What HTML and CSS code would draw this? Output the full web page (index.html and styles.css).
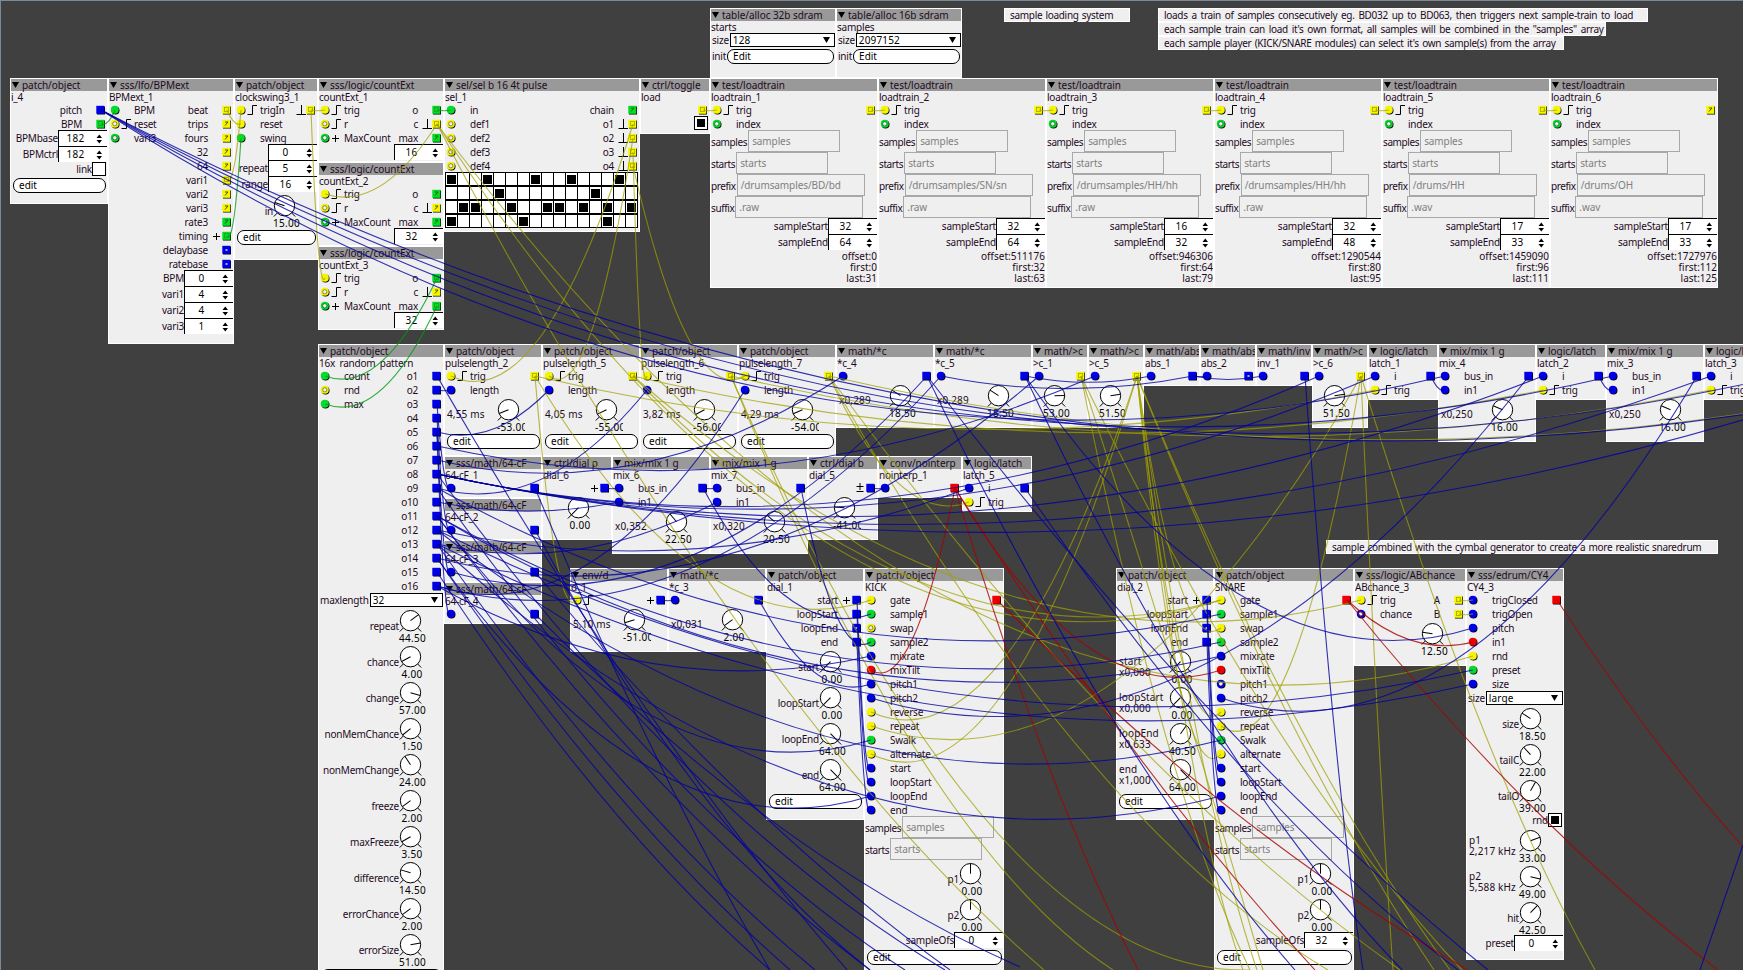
FILE: index.html
```html
<!DOCTYPE html>
<html lang="en">
<head>
<meta charset="utf-8">
<title>Patch editor</title>
<link rel="stylesheet" href="styles.css">
</head>
<body>
<main class="patch" id="patch">
  <svg class="wires" id="wires" width="1743" height="970" viewBox="0 0 1743 970"></svg>
</main>
<script src="patch.js"></script>
</body>
</html>
```
FILE: styles.css
```css
* { box-sizing: border-box; }
body { margin: 0; background: #404040; }
.patch {
  position: relative;
  width: 1743px;
  height: 970px;
  overflow: hidden;
  border-top: 1px solid #7a8a99;
  border-left: 1px solid #7a8a99;
  background: #404040;
  font-family: "Noto Sans", "Open Sans", sans-serif;
  font-size: 10px;
  line-height: 11px;
  letter-spacing: -0.22px;
  color: #1e0a1e;
  white-space: nowrap;
}
.wires { position: absolute; left: -1px; top: -1px; z-index: 2; fill: none; stroke-width: 1.1; }
.wire-b { stroke: #0000a0; stroke-opacity: 0.8; }
.wire-y { stroke: #a0a000; stroke-opacity: 0.72; }
.wire-g { stroke: #009a10; stroke-opacity: 0.78; }
.wire-r { stroke: #a80000; stroke-opacity: 0.8; }

.node {
  position: absolute;
  display: flex;
  flex-direction: column;
  background: #efefef;
  border: 1px solid #fff;
  overflow: hidden;
}
.node-title {
  flex: none;
  display: flex;
  align-items: center;
  height: 12px;
  gap: 3px;
  padding: 1px 0 0 1px;
  background: #999;
  letter-spacing: -0.05px;
}
.tri { flex: none; width: 7px; height: 6px; fill: #000; }
.node-title .tri { margin-top: -2px; }
.node-name { flex: none; height: 11px; line-height: 12px; word-spacing: 2px; }
.io-row { flex: none; display: flex; justify-content: space-between; height: 14px; padding: 2px 1px 0; }
.inlet, .outlet { display: flex; align-items: center; height: 12px; }
.outlet { margin-left: auto; }
.port { flex: none; width: 10px; height: 10px; overflow: visible; }
.glyph { flex: none; width: 14px; height: 12px; fill: none; stroke: #000; stroke-width: 1; }

.row { flex: none; display: flex; justify-content: flex-end; align-items: center; }
.row-spin { height: 16px; }
.spin {
  display: flex;
  align-items: center;
  width: 49px;
  height: 16px;
  background: #fff;
  border-top: 1px solid #000;
  border-left: 1px solid #000;
  color: #000;
}
.spin-value { width: 33px; text-align: center; letter-spacing: 0.2px; }
.spin-arrows { width: 14px; height: 10px; fill: #000; }

.row-dial { height: 36px; }
.row-dial .label { padding-top: 2px; }
.row-dial .unit { margin-right: auto; padding: 1px 0 0 2px; letter-spacing: 0.15px; }
.dial { width: 44px; height: 36px; }
.dial-face { display: block; width: 27px; height: 26px; overflow: visible; }
.dial-circle { fill: #fff; stroke: #000; stroke-width: 1; }
.dial-mark { stroke: #000; stroke-width: 1; }
.dial-value {
  display: block;
  width: 26px;
  height: 10px;
  line-height: 10px;
  text-align: center;
  color: #000;
  letter-spacing: 0.3px;
}
.dial-value-long { width: 28px; text-align: left; overflow-x: clip; }

.row-check { height: 14px; padding-right: 1px; }
.check { width: 14px; height: 14px; padding: 2px; background: #fff; border: 1px solid #000; }
.check-on { display: block; width: 8px; height: 8px; background: #000; }

.row-btn { height: 17px; padding: 2px 1px 0 2px; }
.row-btn .label { padding-left: 0; margin-left: -1px; margin-right: 1px; }
.btn {
  flex: 1;
  height: 15px;
  padding-left: 5px;
  line-height: 13px;
  background: #fff;
  border: 1px solid #000;
  border-radius: 7px;
  color: #000;
  letter-spacing: 0;
}
.row-drop { height: 15px; padding: 1px 0 0 1px; }
.row-drop .label { padding-right: 1px; }
.drop {
  flex: 1;
  display: flex;
  align-items: center;
  justify-content: space-between;
  height: 14px;
  padding: 0 4px 0 2px;
  background: #fff;
  border: 1px solid #000;
  color: #000;
  letter-spacing: 0.15px;
}
.row-field { height: 22px; justify-content: flex-start; letter-spacing: -0.4px; }
.row-field .label { padding-top: 2px; padding-right: 1px; }
.field { height: 22px; padding-left: 3px; line-height: 20px; border: 1px solid #a8a8a8; color: #808080; letter-spacing: -0.1px; }
.row-info { height: 11px; padding-top: 1px; letter-spacing: 0; }

.steps { display: grid; grid-template-columns: repeat(16, 12px); width: 193px; margin: 0; background: #000; padding: 1px 0 1px 1px; row-gap: 2px; }
.step { height: 12px; padding: 2px 1px 1px; margin-right: 1px; background: #fff; }
.step-on { display: block; height: 9px; background: #000; }

.comment {
  position: absolute;
  height: 14px;
  padding-left: 5px;
  line-height: 13px;
  background: #efefef;
  border: 1px solid #fff;
  letter-spacing: -0.3px;
}
```
FILE: patch.js
```js
const patch = document.getElementById('patch');
const wires = document.getElementById('wires');
const COLORS = { b: '#0000e6', y: '#f5f500', g: '#00dc28', r: '#f00000' };
const TRI = '<svg class="tri" viewBox="0 0 7 6"><path d="M0 0H7L3.5 6Z"/></svg>';
const IN_GLYPHS = {
  r: '<path d="M1.5 10.5H6.5V1.5H11"/>',
  p: '<path d="M2 6.5H9M5.5 3V10"/>',
  '-': ''
};
const OUT_GLYPHS = {
  p: '<path d="M5 6.5H12M8.5 3V10"/>',
  m: '<path d="M4.5 4.5H11.5M8 1V8M4.5 9.5H11.5"/>',
  u: '<path d="M4.5 10.5H14M9.5 10V1"/>',
  '-': ''
};

/* Port spec: colour letter (upper case = connected), glyph letter, label. */
function inlet(spec) {
  const on = spec[0] !== spec[0].toLowerCase();
  const c = COLORS[spec[0].toLowerCase()];
  const hole = on ? '' : '<circle cx="4.8" cy="4.8" r="2.1" fill="#efefef" stroke="#000" stroke-opacity=".6" stroke-width=".7"/>';
  return `<span class="inlet"><svg class="port" viewBox="0 0 10 10"><circle cx="5.5" cy="5.6" r="4" fill="#000"/><circle cx="4.8" cy="4.8" r="4" fill="${c}"/>${hole}</svg><svg class="glyph" viewBox="0 0 14 12">${IN_GLYPHS[spec[1]]}</svg><span>${spec.slice(2)}</span></span>`;
}
function outlet(spec) {
  const key = spec[0].toLowerCase(), on = spec[0] !== key;
  let mark = '';
  if (key === 'b') mark = on ? '' : '<rect x="3.5" y="4" width="2" height="2" fill="#aab"/>';
  else if (key !== 'r') mark = on
    ? '<rect x="2.5" y="2.5" width="4" height="4" fill="none" stroke="#550" stroke-opacity=".8" stroke-width="1" stroke-dasharray="1 1"/>'
    : '<path d="M3 3H6M6 3L3 6.5" fill="none" stroke="#440" stroke-width=".9"/>';
  return `<span class="outlet"><span>${spec.slice(2)}</span><svg class="glyph" viewBox="0 0 14 12">${OUT_GLYPHS[spec[1]]}</svg><svg class="port" viewBox="0 0 10 10"><rect x="1" y="1.5" width="8" height="8" fill="#000"/><rect x=".3" y=".8" width="8" height="8" fill="${COLORS[key]}"/>${mark}</svg></span>`;
}

const STEPS = [[0, 3, 7, 10, 14], [4, 12], [1, 2, 5, 8, 9, 11, 13, 15], [0, 6, 13]];
const label = t => t ? `<span class="label">${t}</span>` : '';
const widgets = {
  spin: (t, v) => `<div class="row row-spin">${label(t)}<span class="spin"><span class="spin-value">${v}</span><svg class="spin-arrows" viewBox="0 0 14 10"><path d="M4.5 4L7.3 0.5L10 4ZM4.5 6L7.3 9.5L10 6Z"/></svg></span></div>`,
  dial: (t, v, bipolar, unit) => {
    const n = parseFloat(v);
    const deg = bipolar ? n / 64 * 135 : n / 64 * 270 - 135;
    return `<div class="row row-dial">${unit ? `<span class="unit">${unit}</span>` : label(t)}<span class="dial"><svg class="dial-face" viewBox="0 0 27 26"><path class="dial-mark" d="M4.3 21L0.8 24.5M18.7 21L22.2 24.5"/><circle class="dial-circle" cx="11.5" cy="13.7" r="10.2"/><path class="dial-mark" d="M11.5 13.7V3.6" transform="rotate(${deg} 11.5 13.7)"/></svg><span class="dial-value${v.length > 5 ? ' dial-value-long' : ''}">${v}</span></span></div>`;
  },
  check: (t, on) => `<div class="row row-check">${label(t)}<span class="check">${on ? '<i class="check-on"></i>' : ''}</span></div>`,
  btn: (t, v) => `<div class="row row-btn">${label(t)}<span class="btn">${v}</span></div>`,
  drop: (t, v) => `<div class="row row-drop">${label(t)}<span class="drop">${v}${TRI}</span></div>`,
  field: (t, v, w) => `<div class="row row-field">${label(t)}<span class="field" style="width:${w}px">${v}</span></div>`,
  info: t => `<div class="row row-info">${t}</div>`,
  steps: () => `<div class="steps">${STEPS.map(r => Array.from({ length: 16 }, (_, i) => `<span class="step">${r.includes(i) ? '<i class="step-on"></i>' : ''}</span>`).join('')).join('')}</div>`
};

const nodes = {};
function node(x, y, w, h, title, name, ins = [], outs = [], params = []) {
  nodes[name] = { x, y, w };
  const el = document.createElement('section');
  el.className = 'node';
  el.style.cssText = `left:${x - 1}px;top:${y - 1}px;width:${w}px;height:${h}px`;
  let html = `<div class="node-title">${TRI}${title}</div><div class="node-name">${name}</div>`;
  for (let i = 0; i < Math.max(ins.length, outs.length); i++) {
    html += `<div class="io-row">${ins[i] ? inlet(ins[i]) : ''}${outs[i] ? outlet(outs[i]) : ''}</div>`;
  }
  el.innerHTML = html + params.map(([k, ...a]) => widgets[k](...a)).join('');
  patch.append(el);
}
function comment(x, y, w, text, spacing) {
  const el = document.createElement('div');
  el.className = 'comment';
  el.style.cssText = `left:${x - 1}px;top:${y - 1}px;width:${w}px;word-spacing:${spacing}px`;
  el.textContent = text;
  patch.append(el);
}

/* ---- objects ---- */
node(710, 8, 126, 70, 'table/alloc 32b sdram', 'starts', [], [], [['drop', 'size', '128'], ['btn', 'init', 'Edit']]);
node(836, 8, 126, 70, 'table/alloc 16b sdram', 'samples', [], [], [['drop', 'size', '2097152'], ['btn', 'init', 'Edit']]);
comment(1004, 8, 126, 'sample loading system', 0.8);
comment(1158, 8, 490, 'loads a train of samples consecutively eg. BD032 up to BD063, then triggers next sample-train to load', 1.5);
comment(1158, 22, 448, 'each sample train can load it\'s own format, all samples will be combined in the "samples" array', 1.5);
comment(1158, 36, 406, 'each sample player (KICK/SNARE modules) can select it\'s own sample(s) from the array', 1);
comment(1326, 540, 392, 'sample combined with the cymbal generator to create a more realistic snaredrum', 0.85);

node(10, 78, 98, 126, 'patch/object', 'i_4', [], ['B-pitch', 'G-BPM'],
  [['spin', 'BPMbase', 182], ['spin', 'BPMctrl', 182], ['check', 'link'], ['btn', '', 'edit']]);
node(108, 78, 126, 266, 'sss/lfo/BPMext', 'BPMext_1', ['G-BPM', 'yrreset', 'g-vari3'],
  ['Y-beat', 'y-trips', 'y-fours', 'y-32', 'y-64', 'Y-vari1', 'y-vari2', 'y-vari3', 'g-rate3', 'Gptiming', 'b-delaybase', 'b-ratebase'],
  [['spin', 'BPM', 0], ['spin', 'vari1', 4], ['spin', 'vari2', 4], ['spin', 'vari3', 1]]);
node(234, 78, 84, 182, 'patch/object', 'clockswing3_1', ['YrtrigIn', 'Y-reset', 'G-swing'], ['Yu'],
  [['spin', '', 0], ['spin', 'repeat', 5], ['spin', 'range', 16], ['dial', 'in', '15.00'], ['btn', '', 'edit']]);
node(318, 78, 126, 84, 'sss/logic/countExt', 'countExt_1', ['Yrtrig', 'yrr', 'gpMaxCount'], ['G-o', 'Yuc', 'g-max'], [['spin', '', 16]]);
node(318, 162, 126, 84, 'sss/logic/countExt', 'countExt_2', ['Yrtrig', 'yrr', 'gpMaxCount'], ['g-o', 'yuc', 'g-max'], [['spin', '', 32]]);
node(318, 246, 126, 84, 'sss/logic/countExt', 'countExt_3', ['Yrtrig', 'yrr', 'gpMaxCount'], ['G-o', 'yuc', 'G-max'], [['spin', '', 32]]);
node(444, 78, 196, 154, 'sel/sel b 16 4t pulse', 'sel_1', ['G-in', 'y-def1', 'y-def2', 'y-def3', 'y-def4'],
  ['g-chain', 'Yuo1', 'Yuo2', 'Yuo3', 'Yuo4'], [['steps']]);
node(640, 78, 70, 56, 'ctrl/toggle', 'load', [], ['Y-'], [['check', '', true]]);
[['/drumsamples/BD/bd', '.raw', 32, 64, 0, 0, 31], ['/drumsamples/SN/sn', '.raw', 32, 64, 511176, 32, 63],
 ['/drumsamples/HH/hh', '.raw', 16, 32, 946306, 64, 79], ['/drumsamples/HH/hh', '.raw', 32, 48, 1290544, 80, 95],
 ['/drums/HH', '.wav', 17, 33, 1459090, 96, 111], ['/drums/OH', '.wav', 17, 33, 1727976, 112, 125]
].forEach(([prefix, suffix, s, e, off, first, last], i) =>
  node(710 + 168 * i, 78, 168, 210, 'test/loadtrain', 'loadtrain_' + (i + 1), ['Yrtrig', 'g-index'], [i < 5 ? 'Y-' : 'y-'],
    [['field', 'samples', 'samples', 92], ['field', 'starts', 'starts', 92], ['field', 'prefix', prefix, 128], ['field', 'suffix', suffix, 128],
     ['spin', 'sampleStart', s], ['spin', 'sampleEnd', e], ['info', 'offset:' + off], ['info', 'first:' + first], ['info', 'last:' + last]]));

node(318, 344, 126, 700, 'patch/object', '16x random pattern', ['G-count', 'y-rnd', 'G-max'],
  Array.from({ length: 16 }, (_, i) => 'B-o' + (i + 1)),
  [['drop', 'maxlength', '32'], ...[['repeat', '44.50'], ['chance', '4.00'], ['change', '57.00'], ['nonMemChance', '1.50'], ['nonMemChange', '24.00'],
    ['freeze', '2.00'], ['maxFreeze', '3.50'], ['difference', '14.50'], ['errorChance', '2.00'], ['errorSize', '51.00']].map(d => ['dial', ...d]), ['btn', '', 'edit']]);
[[2, '-53.00', '4,55 ms'], [5, '-55.00', '4,05 ms'], [6, '-56.00', '3,82 ms'], [7, '-54.00', '4,29 ms']].forEach(([n, v, u], i) =>
  node(444 + 98 * i, 344, 98, 112, 'patch/object', 'pulselength_' + n, ['Yrtrig', 'B-length'], ['Y-'], [['dial', '', v, true, u], ['btn', '', 'edit']]));
node(836, 344, 98, 84, 'math/*c', '*c_4', ['B-'], ['B-'], [['dial', '', '18.50', false, 'x0,289']]);
node(934, 344, 98, 84, 'math/*c', '*c_5', ['B-'], ['B-'], [['dial', '', '18.50', false, 'x0,289']]);
node(1032, 344, 56, 84, 'math/&gt;c', '>c_1', ['B-'], ['Y-'], [['dial', '', '53.00']]);
node(1088, 344, 56, 84, 'math/&gt;c', '>c_5', ['B-'], ['Y-'], [['dial', '', '51.50']]);
node(1144, 344, 56, 42, 'math/abs', 'abs_1', ['B-'], ['B-']);
node(1200, 344, 56, 42, 'math/abs', 'abs_2', ['B-'], ['b-']);
node(1256, 344, 56, 42, 'math/inv', 'inv_1', ['B-'], ['B-']);
node(1312, 344, 56, 84, 'math/&gt;c', '>c_6', ['B-'], ['Y-'], [['dial', '', '51.50']]);
node(1368, 344, 70, 56, 'logic/latch', 'latch_1', ['B-i', 'Yrtrig'], ['B-']);
node(1438, 344, 98, 98, 'mix/mix 1 g', 'mix_4', ['B-bus_in', 'B-in1'], ['B-'], [['dial', '', '16.00', false, 'x0,250']]);
node(1536, 344, 70, 56, 'logic/latch', 'latch_2', ['B-i', 'Yrtrig'], ['B-']);
node(1606, 344, 98, 98, 'mix/mix 1 g', 'mix_3', ['B-bus_in', 'B-in1'], ['B-'], [['dial', '', '16.00', false, 'x0,250']]);
node(1704, 344, 70, 56, 'logic/latch', 'latch_3', ['B-i', 'Yrtrig'], ['B-']);

for (let i = 0; i < 4; i++) node(444, 456 + 42 * i, 98, 42, 'sss/math/64-cF', '64-cF_' + (i + 1), ['B-'], ['B-']);
node(542, 456, 70, 84, 'ctrl/dial p', 'dial_6', [], ['Bp'], [['dial', '', '0.00']]);
node(612, 456, 98, 98, 'mix/mix 1 g', 'mix_6', ['B-bus_in', 'B-in1'], ['B-'], [['dial', '', '22.50', false, 'x0,352']]);
node(710, 456, 98, 98, 'mix/mix 1 g', 'mix_7', ['B-bus_in', 'B-in1'], ['B-'], [['dial', '', '20.50', false, 'x0,320']]);
node(808, 456, 70, 84, 'ctrl/dial b', 'dial_5', [], ['Bm'], [['dial', '', '-41.00', true]]);
node(878, 456, 84, 42, 'conv/nointerp', 'nointerp_1', ['B-'], ['R-']);
node(962, 456, 70, 56, 'logic/latch', 'latch_5', ['B-i', 'Yrtrig'], ['B-']);

const player = ofs => [['field', 'samples', 'samples', 92], ['field', 'starts', 'starts', 92], ['dial', 'p1', '0.00', true], ['dial', 'p2', '0.00', true], ['spin', 'sampleOfs', ofs], ['btn', '', 'edit']];
const playerIns = (swap, pitch1) => ['Y-gate', 'G-sample1', swap, 'G-sample2', 'B-mixrate', 'R-mixTilt', pitch1, 'B-pitch2', 'Y-reverse', 'Y-repeat', 'G-Swalk', 'Y-alternate', 'B-start', 'B-loopStart', 'B-loopEnd', 'B-end'];
node(570, 568, 98, 84, 'env/d', 'd_1', ['Yr'], ['Bp'], [['dial', '', '-51.00', true, '5,10 ms']]);
node(668, 568, 98, 84, 'math/*c', '*c_3', ['B-'], ['B-'], [['dial', '', '2.00', false, 'x0,031']]);
node(766, 568, 98, 252, 'patch/object', 'dial_1', [], ['Bpstart', 'B-loopStart', 'b-loopEnd', 'B-end'],
  [['dial', 'start', '0.00'], ['dial', 'loopStart', '0.00'], ['dial', 'loopEnd', '64.00'], ['dial', 'end', '64.00'], ['btn', '', 'edit']]);
node(864, 568, 140, 434, 'patch/object', 'KICK', playerIns('y-swap', 'B-pitch1'), ['R-'], player(0));
node(1116, 568, 98, 252, 'patch/object', 'dial_2', [], ['Bpstart', 'B-loopStart', 'b-loopEnd', 'B-end'],
  [['dial', '', '0.00', false, 'start<br>x0,000'], ['dial', '', '0.00', false, 'loopStart<br>x0,000'], ['dial', '', '40.50', false, 'loopEnd<br>x0,633'], ['dial', '', '64.00', false, 'end<br>x1,000'], ['btn', '', 'edit']]);
node(1214, 568, 140, 434, 'patch/object', 'SNARE', playerIns('Y-swap', 'b-pitch1'), ['R-'], player(32));
node(1354, 568, 112, 98, 'sss/logic/ABchance', 'ABchance_3', ['Yrtrig', 'b-chance'], ['Y-A', 'Y-B'], [['dial', '', '12.50']]);
node(1466, 568, 98, 392, 'sss/edrum/CY4', 'CY4_3', ['B-trigClosed', 'B-trigOpen', 'B-pitch', 'R-in1', 'Y-rnd', 'G-preset', 'B-size'], ['R-'],
  [['drop', 'size', 'large'], ['dial', 'size', '18.50'], ['dial', 'tailC', '22.00'], ['dial', 'tailO', '39.00'], ['check', 'rnd', true],
   ['dial', '', '33.00', true, 'p1<br>2,217 kHz'], ['dial', '', '49.00', true, 'p2<br>5,588 kHz'], ['dial', 'hit', '42.50'], ['spin', 'preset', 0]]);

/* ---- wires ---- */
const out = (id, row = 0) => [nodes[id].x + nodes[id].w - 7, nodes[id].y + 32 + 14 * row];
const inp = (id, row = 0) => [nodes[id].x + 7, nodes[id].y + 32 + 14 * row];
const o = n => out('16x random pattern', n - 1);
const paths = [];
const draw = (c, d) => paths.push(`<path class="wire-${c}" d="${d}"/>`);
/* A slack cable sags below its lower end by a tenth of its span. */
function wire(c, [x1, y1], ...ends) {
  for (const [x2, y2] of ends) {
    const cy = Math.max(y1, y2) + Math.abs(y2 - y1) * 0.1 + Math.abs(x2 - x1) * 0.1;
    draw(c, `M${x1} ${y1}Q${(x1 + x2) / 2} ${cy} ${x2} ${y2}`);
  }
}
/* Cables that leave the visible canvas: start, one point on the way, exit point. */
function exit(c, [x0, y0], [px, py], [qx, qy]) {
  const u = px - x0, v = qx - x0;
  const sag = ((qy - y0) / v - (py - y0) / u) / (v - u);
  const slope = (py - y0) / u - sag * u;
  draw(c, `M${x0} ${y0}Q${x0 + v / 2} ${y0 + slope * v / 2} ${qx} ${qy}`);
}

wire('g', out('i_4', 1), inp('BPMext_1'));
wire('g', out('BPMext_1', 9), inp('clockswing3_1', 2));
wire('g', out('countExt_1'), inp('sel_1'));
wire('g', out('countExt_3'), inp('16x random pattern'));
wire('g', out('countExt_3', 2), inp('16x random pattern', 2));

wire('y', out('BPMext_1'), inp('clockswing3_1', 1));
wire('y', out('BPMext_1', 5), inp('clockswing3_1'));
wire('y', out('clockswing3_1'), inp('countExt_1'), inp('countExt_3'));
wire('y', out('countExt_1', 1), inp('countExt_2'), inp('SNARE'), inp('CY4_3', 4), [1751, 1151]);
wire('y', out('load'), inp('loadtrain_1'));
for (let i = 1; i < 6; i++) wire('y', out('loadtrain_' + i), inp('loadtrain_' + (i + 1)));
[2, 5, 6, 7].forEach((n, i) => wire('y', out('sel_1', i + 1), inp('pulselength_' + n)));
wire('y', out('pulselength_2'), inp('latch_1', 1), inp('d_1'), inp('KICK'));
wire('y', out('pulselength_5'), inp('latch_2', 1), inp('SNARE'), inp('ABchance_3'));
wire('y', out('pulselength_6'), inp('latch_3', 1));
wire('y', out('pulselength_7'), [1879, 390], inp('latch_5', 1));
exit('y', out('pulselength_6'), [823, 570], [1250, 970]);
exit('y', out('pulselength_6'), [817, 570], [1113, 970]);
exit('y', out('pulselength_7'), [980, 570], [1400, 970]);
exit('y', out('pulselength_7'), [947, 570], [1328, 970]);
wire('y', out('>c_5'), inp('KICK', 8), inp('KICK', 11), inp('SNARE', 2), inp('SNARE', 8), inp('SNARE', 11));
exit('y', out('>c_5'), [1219, 570], [1434, 970]);
exit('y', out('>c_5'), [1222, 570], [1450, 970]);
exit('y', out('>c_5'), [1162, 570], [1243, 970]);
exit('y', out('>c_5'), [1167, 570], [1257, 970]);
exit('y', out('>c_1'), [1123, 570], [1250, 970]);
exit('y', out('>c_1'), [1143, 570], [1263, 970]);
exit('y', out('>c_1'), [1182, 570], [1462, 970]);
wire('y', out('>c_6'), inp('KICK', 9), inp('SNARE', 9));
exit('y', out('>c_6'), [1370, 570], [1393, 970]);
exit('y', out('>c_6'), [1424, 570], [1595, 970]);
wire('y', out('ABchance_3'), inp('CY4_3'));
wire('y', out('ABchance_3', 1), inp('CY4_3', 1));

wire('r', out('nointerp_1'), inp('KICK', 5), inp('SNARE', 5));
exit('r', out('nointerp_1'), [1020, 688], [1138, 970]);
exit('r', out('nointerp_1'), [1090, 690], [1315, 970]);
exit('r', out('KICK'), [1213, 795], [1468, 970]);
wire('r', out('SNARE'), inp('CY4_3', 3));
exit('r', out('SNARE'), [1466, 738], [1718, 970]);
exit('r', out('CY4_3'), [1650, 733], [1743, 847]);

wire('b', out('i_4'), inp('mix_4'), inp('mix_3'), [1781, 376], [1949, 376]);
wire('b', o(1), [1900, 1400]);
wire('b', o(2), inp('pulselength_2', 1));
wire('b', o(3), inp('64-cF_1'));
wire('b', o(4), inp('64-cF_2'));
wire('b', o(5), inp('pulselength_5', 1), inp('64-cF_3'), inp('64-cF_4'));
wire('b', o(6), inp('>c_5'));
wire('b', o(7), inp('*c_4'));
wire('b', o(8), inp('>c_6'), inp('latch_1'), inp('latch_2'), inp('latch_3'), [1879, 376]);
wire('b', o(9), inp('pulselength_6', 1), inp('SNARE', 1));
wire('b', o(10), inp('mix_6', 1));
wire('b', o(11), inp('SNARE', 3), inp('SNARE', 4), inp('KICK', 10));
wire('b', o(12), inp('latch_5'), inp('CY4_3', 5), inp('SNARE', 10));
wire('b', o(13), inp('mix_7', 1), inp('CY4_3', 6), inp('SNARE', 14));
wire('b', o(14), inp('>c_1'), inp('KICK', 14));
wire('b', o(16), inp('pulselength_7', 1), inp('*c_5'), inp('KICK', 4));
exit('b', o(15), [670, 874], [770, 970]);
exit('b', o(14), [670, 853], [790, 970]);
exit('b', o(13), [670, 833], [815, 970]);
exit('b', o(11), [670, 792], [870, 970]);
exit('b', o(9), [670, 773], [905, 970]);
exit('b', o(8), [670, 750], [945, 970]);
exit('b', out('64-cF_1'), [570, 570], [770, 970]);
exit('b', out('64-cF_2'), [670, 750], [870, 970]);
exit('b', out('64-cF_3'), [670, 723], [950, 970]);
exit('b', out('64-cF_4'), [670, 740], [1020, 967]);
wire('b', out('dial_6'), inp('mix_6'));
wire('b', out('mix_6'), inp('mix_7'), inp('KICK', 1));
wire('b', out('mix_7'), inp('KICK', 3));
wire('b', out('dial_5'), inp('nointerp_1'));
wire('b', out('d_1'), inp('*c_3'));
wire('b', out('*c_3'), inp('KICK', 6));
for (const [d, p] of [['dial_1', 'KICK'], ['dial_2', 'SNARE']]) {
  wire('b', out(d, 0), inp(p, 12));
  wire('b', out(d, 1), inp(p, 13));
  wire('b', out(d, 3), inp(p, 15));
}
wire('b', out('*c_4'), inp('64-cF_3'));
exit('b', out('*c_4'), [1090, 577], [1488, 970]);
exit('b', out('*c_4'), [1030, 577], [1295, 970]);
wire('b', out('*c_5'), inp('abs_1'), inp('CY4_3', 2), [1886, 1128]);
wire('b', out('abs_1'), inp('abs_2'), inp('inv_1'), inp('*c_5'));
exit('b', out('inv_1'), [1320, 570], [1363, 970]);
wire('b', out('latch_5'), [2113, 1115]);
wire('b', out('latch_1'), inp('mix_4', 1));
wire('b', out('latch_2'), inp('mix_3', 1));
wire('b', out('mix_4'), inp('KICK', 7));
wire('b', out('mix_3'), inp('SNARE', 7));
draw('b', 'M1743 845L1700 970');
wires.innerHTML = paths.join('');
```
